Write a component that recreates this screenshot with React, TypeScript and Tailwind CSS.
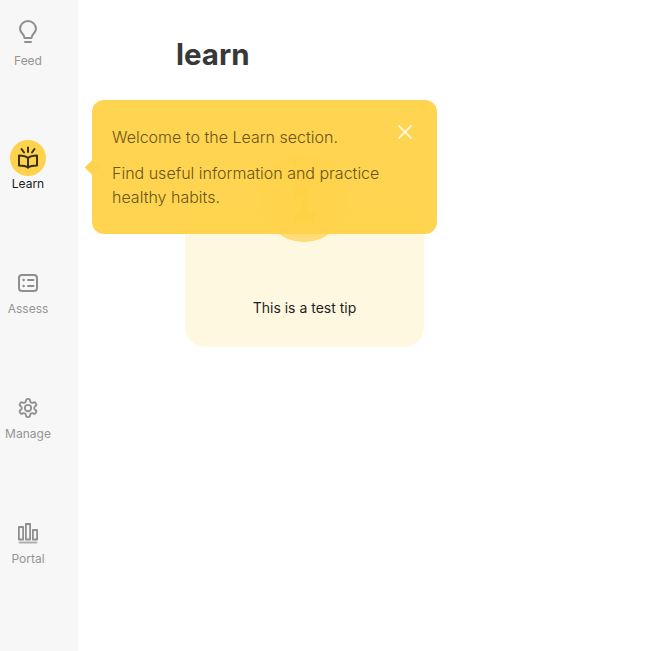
import React from "react";

function Bulb() {
  return (
    <svg width="24" height="24" viewBox="0 0 24 24" fill="none" stroke="#8f8f8f" strokeWidth="2" strokeLinecap="round" strokeLinejoin="round">
      <path d="M8.500 18c0-2-.8-3-2.200-4.500A8 8 0 0 1 4 9a8 8 0 0 1 16 0 8 8 0 0 1-2.300 4.500C16.300 15 15.500 16 15.500 18z" />
      <path d="M9 22h6" />
    </svg>
  );
}
function Book() {
  return (
    <svg width="24" height="24" viewBox="0 0 24 24" fill="none" stroke="#3a3018" strokeWidth="2" strokeLinejoin="round" strokeLinecap="round">
      <path d="M12 12C10 10.300 7 9.500 3 9.500v10c4 0 7 .6 9 2 2-1.400 5-2 9-2v-10C17 9.500 14 10.300 12 12z" />
      <path d="M12 12v9.500" />
      <path d="M12 1.500V6M5.500 3L8 6.500M18.500 3L16 6.500" />
    </svg>
  );
}
function Assess() {
  return (
    <svg width="24" height="24" viewBox="0 0 24 24" fill="none" stroke="#8f8f8f" strokeWidth="2" strokeLinecap="round">
      <rect x="3" y="4" width="18" height="16" rx="3" />
      <path d="M12 9h5.500M12 15h5.500" />
      <circle cx="7.500" cy="9" r="0.800" fill="#8f8f8f" strokeWidth="1" />
      <circle cx="7.500" cy="15" r="0.800" fill="#8f8f8f" strokeWidth="1" />
    </svg>
  );
}
function Gear() {
  return (
    <svg width="22" height="22" viewBox="0 0 24 24" fill="none" stroke="#8f8f8f" strokeWidth="2" strokeLinecap="round" strokeLinejoin="round">
      <path d="M12.220 2h-.44a2 2 0 0 0-2 2v.180a2 2 0 0 1-1 1.730l-.430.250a2 2 0 0 1-2 0l-.150-.080a2 2 0 0 0-2.730.730l-.220.380a2 2 0 0 0 .730 2.730l.150.100a2 2 0 0 1 1 1.720v.510a2 2 0 0 1-1 1.740l-.150.090a2 2 0 0 0-.730 2.730l.220.380a2 2 0 0 0 2.730.730l.150-.080a2 2 0 0 1 2 0l.430.250a2 2 0 0 1 1 1.730V20a2 2 0 0 0 2 2h.440a2 2 0 0 0 2-2v-.180a2 2 0 0 1 1-1.730l.430-.250a2 2 0 0 1 2 0l.150.080a2 2 0 0 0 2.730-.730l.220-.390a2 2 0 0 0-.730-2.730l-.150-.080a2 2 0 0 1-1-1.740v-.500a2 2 0 0 1 1-1.740l.150-.090a2 2 0 0 0 .730-2.730l-.220-.380a2 2 0 0 0-2.730-.730l-.150.080a2 2 0 0 1-2 0l-.430-.250a2 2 0 0 1-1-1.730V4a2 2 0 0 0-2-2z" />
      <circle cx="12" cy="12" r="3.500" />
    </svg>
  );
}
function Bars() {
  return (
    <svg width="24" height="24" viewBox="0 0 24 24" fill="none" stroke="#8f8f8f" strokeWidth="1.800" strokeLinejoin="round" strokeLinecap="round">
      <rect x="2.900" y="6" width="4.200" height="12.500" />
      <rect x="9.900" y="3" width="4.200" height="15.500" />
      <rect x="16.900" y="9" width="4.200" height="9.500" />
      <path d="M3.500 21.500h17" stroke="#b0b0b0" />
    </svg>
  );
}

function InfoGlyph() {
  return (
    <svg width="88" height="88" viewBox="0 0 88 88" fill="#f2b40a">
      <circle cx="44" cy="24" r="5" />
      <path d="M34 34h14v25h7v10H34V59h7V44h-7z" />
    </svg>
  );
}

function NavItem({ icon, label, active, first }: { icon: React.ReactNode; label: string; active?: boolean; first?: boolean }) {
  return (
    <div className={`flex flex-col items-center ${first ? "h-[126px]" : "h-[125px]"}`}>
      <div className={`flex h-9 w-9 items-center justify-center rounded-full ${active ? "bg-[#ffd24d]" : ""}`}>{icon}</div>
      <div className={`text-xs leading-4 ${active ? "text-[#1a1a1a]" : "text-[#949494]"} ${first ? "mt-[3px]" : ""}`}>{label}</div>
    </div>
  );
}

export default function App() {
  return (
    <div className="relative flex h-[651px] w-[647px] overflow-hidden bg-white font-['Inter',sans-serif]">
      <aside className="h-full w-[78px] shrink-0 bg-[#f7f7f7] pt-[14px]">
        <div className="w-14">
          <NavItem icon={<Bulb />} label="Feed" first />
          <NavItem icon={<Book />} label="Learn" active />
          <NavItem icon={<Assess />} label="Assess" />
          <NavItem icon={<Gear />} label="Manage" />
          <NavItem icon={<Bars />} label="Portal" />
        </div>
      </aside>
      <main className="flex-1 pl-[98px] pt-[36px]">
        <h1 className="text-[29.500px] font-bold leading-9 text-[#383838]">learn</h1>
        <div className="relative ml-[9px] mt-[126px] h-[149px] w-[239px] rounded-[20px] bg-[#fff8e1]">
          <div className="absolute left-[75px] top-[-44px] flex h-[88px] w-[88px] items-center justify-center rounded-full bg-[#ffdc78]">
            <InfoGlyph />
          </div>
          <p className="absolute bottom-[29px] left-0 right-0 text-center text-sm leading-5 text-[#1f1f1f]">This is a test tip</p>
        </div>
      </main>
      <div className="absolute left-[92px] top-[100px] h-[134px] w-[345px] rounded-xl bg-[#ffd249]/[0.96] px-5 pt-[25px]">
        <div className="absolute left-[-5px] top-[62px] h-[11px] w-[11px] rotate-45 bg-[#ffd24d]" />
        <p className="relative text-base font-light leading-6 text-[#6a5419]">Welcome to the Learn section.</p>
        <p className="relative mt-3 w-[290px] text-base font-light leading-6 text-[#6a5419]">Find useful information and practice healthy habits.</p>
        <svg className="absolute right-[23px] top-[23px]" width="18" height="18" viewBox="0 0 18 18" fill="none" stroke="#fff6d8" strokeWidth="1.800" strokeLinecap="round">
          <path d="M3 3l12 12M15 3L3 15" />
        </svg>
      </div>
    </div>
  );
}
